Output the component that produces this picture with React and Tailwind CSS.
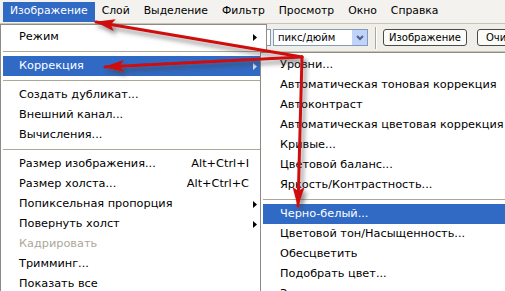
import React from 'react';

const MAIN_MENU = [
    { label: 'Режим', sub: true },
    { sep: true },
    { label: 'Коррекция', sub: true, active: true },
    { sep: true },
    { label: 'Создать дубликат...' },
    { label: 'Внешний канал...' },
    { label: 'Вычисления...' },
    { sep: true },
    { label: 'Размер изображения...', keys: 'Alt+Ctrl+I' },
    { label: 'Размер холста...', keys: 'Alt+Ctrl+C' },
    { label: 'Попиксельная пропорция', sub: true },
    { label: 'Повернуть холст', sub: true },
    { label: 'Кадрировать', disabled: true },
    { label: 'Тримминг...' },
    { label: 'Показать все' },
];

const SUB_MENU = [
    { label: 'Уровни...' },
    { label: 'Автоматическая тоновая коррекция' },
    { label: 'Автоконтраст' },
    { label: 'Автоматическая цветовая коррекция' },
    { label: 'Кривые...' },
    { label: 'Цветовой баланс...' },
    { label: 'Яркость/Контрастность...' },
    { sep: true },
    { label: 'Черно-белый...', active: true },
    { label: 'Цветовой тон/Насыщенность...' },
    { label: 'Обесцветить' },
    { label: 'Подобрать цвет...' },
    { label: 'Заменить цвет...' },
];

const TOP = ['Изображение', 'Слой', 'Выделение', 'Фильтр', 'Просмотр', 'Окно', 'Справка'];

const SubArrow = ({ white }) => (
    <svg width="4" height="7" viewBox="0 0 4 7" className="block">
        <path d="M0 0 L4 3.5 L0 7 Z" fill={white ? '#dfe8f8' : '#000'} />
    </svg>
);

const MenuRow = ({ item, pad }) => {
    if (item.sep) {
        return (
            <div className="h-[9px] pt-[4px]">
                <div className="h-[1px] bg-[#aca899]" />
            </div>
        );
    }
    return (
        <div
            className={`flex items-center h-[20px] ${pad} ${item.active ? 'bg-[#316ac5] text-white' : item.disabled ? 'text-[#aca899]' : 'text-black'}`}
        >
            <span className="flex-1 whitespace-nowrap">{item.label}</span>
            {item.keys && <span className="whitespace-nowrap">{item.keys}</span>}
            <span className="w-[15px] shrink-0 flex items-center pl-[4px]">
                {item.sub && <SubArrow white={item.active} />}
            </span>
        </div>
    );
};

const Arrows = () => (
    <svg width="505" height="291" className="absolute inset-0 pointer-events-none">
        <defs>
            <filter id="shade" x="-20%" y="-20%" width="140%" height="140%">
                <feDropShadow dx="3" dy="4" stdDeviation="2" floodColor="#404040" floodOpacity="0.55" />
            </filter>
            <marker id="head" markerWidth="20" markerHeight="12" refX="19" refY="6" orient="auto" markerUnits="userSpaceOnUse">
                <path d="M0 0 L20 6 L0 12 L4 6 Z" fill="#cf0a0a" />
            </marker>
        </defs>
        <g filter="url(#shade)" stroke="#cf0a0a" strokeWidth="3" fill="none" strokeLinecap="round">
            <line x1="302" y1="57" x2="96" y2="22" markerEnd="url(#head)" />
            <line x1="302" y1="57" x2="105" y2="67" markerEnd="url(#head)" />
            <line x1="302" y1="57" x2="298" y2="206" markerEnd="url(#head)" />
        </g>
    </svg>
);

export default function App() {
    return (
        <div className="relative w-[505px] h-[291px] overflow-hidden bg-white text-[11.3px] font-['DejaVu_Sans',sans-serif]">
            {/* menu bar */}
            <div className="flex items-center h-[24px] pl-[3px] bg-[#f3f2ee] border-b border-[#c9c6b8] text-[10.8px]">
                {TOP.map((t, i) => (
                    <div
                        key={t}
                        className={`h-[20px] shrink-0 flex items-center px-[7px] whitespace-nowrap ${i === 0 ? 'bg-[#316ac5] text-white' : 'text-black'}`}
                    >
                        {t}
                    </div>
                ))}
            </div>

            {/* options bar behind the menus */}
            <div className="flex items-center h-[28px] pl-[263px] bg-[#efeee8] border-b border-[#c9c6b8] text-[10px]">
                <div className="shrink-0 w-[8px] h-[17px] border border-l-0 border-[#7f9db9] bg-white" />
                <div className="shrink-0 ml-[2px] w-[95px] h-[17px] flex border border-[#7f9db9] bg-white">
                    <span className="flex-1 pl-[4px] leading-[15px] whitespace-nowrap">пикс/дюйм</span>
                    <span className="w-[15px] h-full bg-[#c1d3fb] flex items-center justify-center">
                        <svg width="8" height="6" viewBox="0 0 8 6">
                            <path d="M1 1 L4 4 L7 1" stroke="#4d6185" strokeWidth="2" fill="none" />
                        </svg>
                    </span>
                </div>
                <div className="shrink-0 ml-[7px] w-[2px] h-[22px] border-l border-[#aca899] border-r border-r-white" />
                <div className="shrink-0 ml-[6px] w-[84px] h-[17px] flex items-center justify-center rounded-[3px] border border-[#4a4a4a] bg-[#fbfbf8] whitespace-nowrap">
                    Изображение
                </div>
                <div className="shrink-0 ml-[10px] w-[60px] h-[17px] flex items-center pl-[8px] rounded-[3px] border border-[#4a4a4a] bg-[#fbfbf8] whitespace-nowrap">
                    Очистить
                </div>
            </div>

            {/* Изображение dropdown */}
            <div className="absolute left-0 top-[24px] w-[267px] p-[2px] bg-white border border-[#8d8b83]">
                {MAIN_MENU.map((item, i) => (
                    <MenuRow key={i} item={item} pad="pl-[16px]" />
                ))}
            </div>

            {/* Коррекция submenu */}
            <div className="absolute left-[260px] top-[52px] w-[270px] p-[2px] bg-white border border-[#8d8b83]">
                {SUB_MENU.map((item, i) => (
                    <MenuRow key={i} item={item} pad="pl-[17px]" />
                ))}
            </div>

            <Arrows />
        </div>
    );
}
